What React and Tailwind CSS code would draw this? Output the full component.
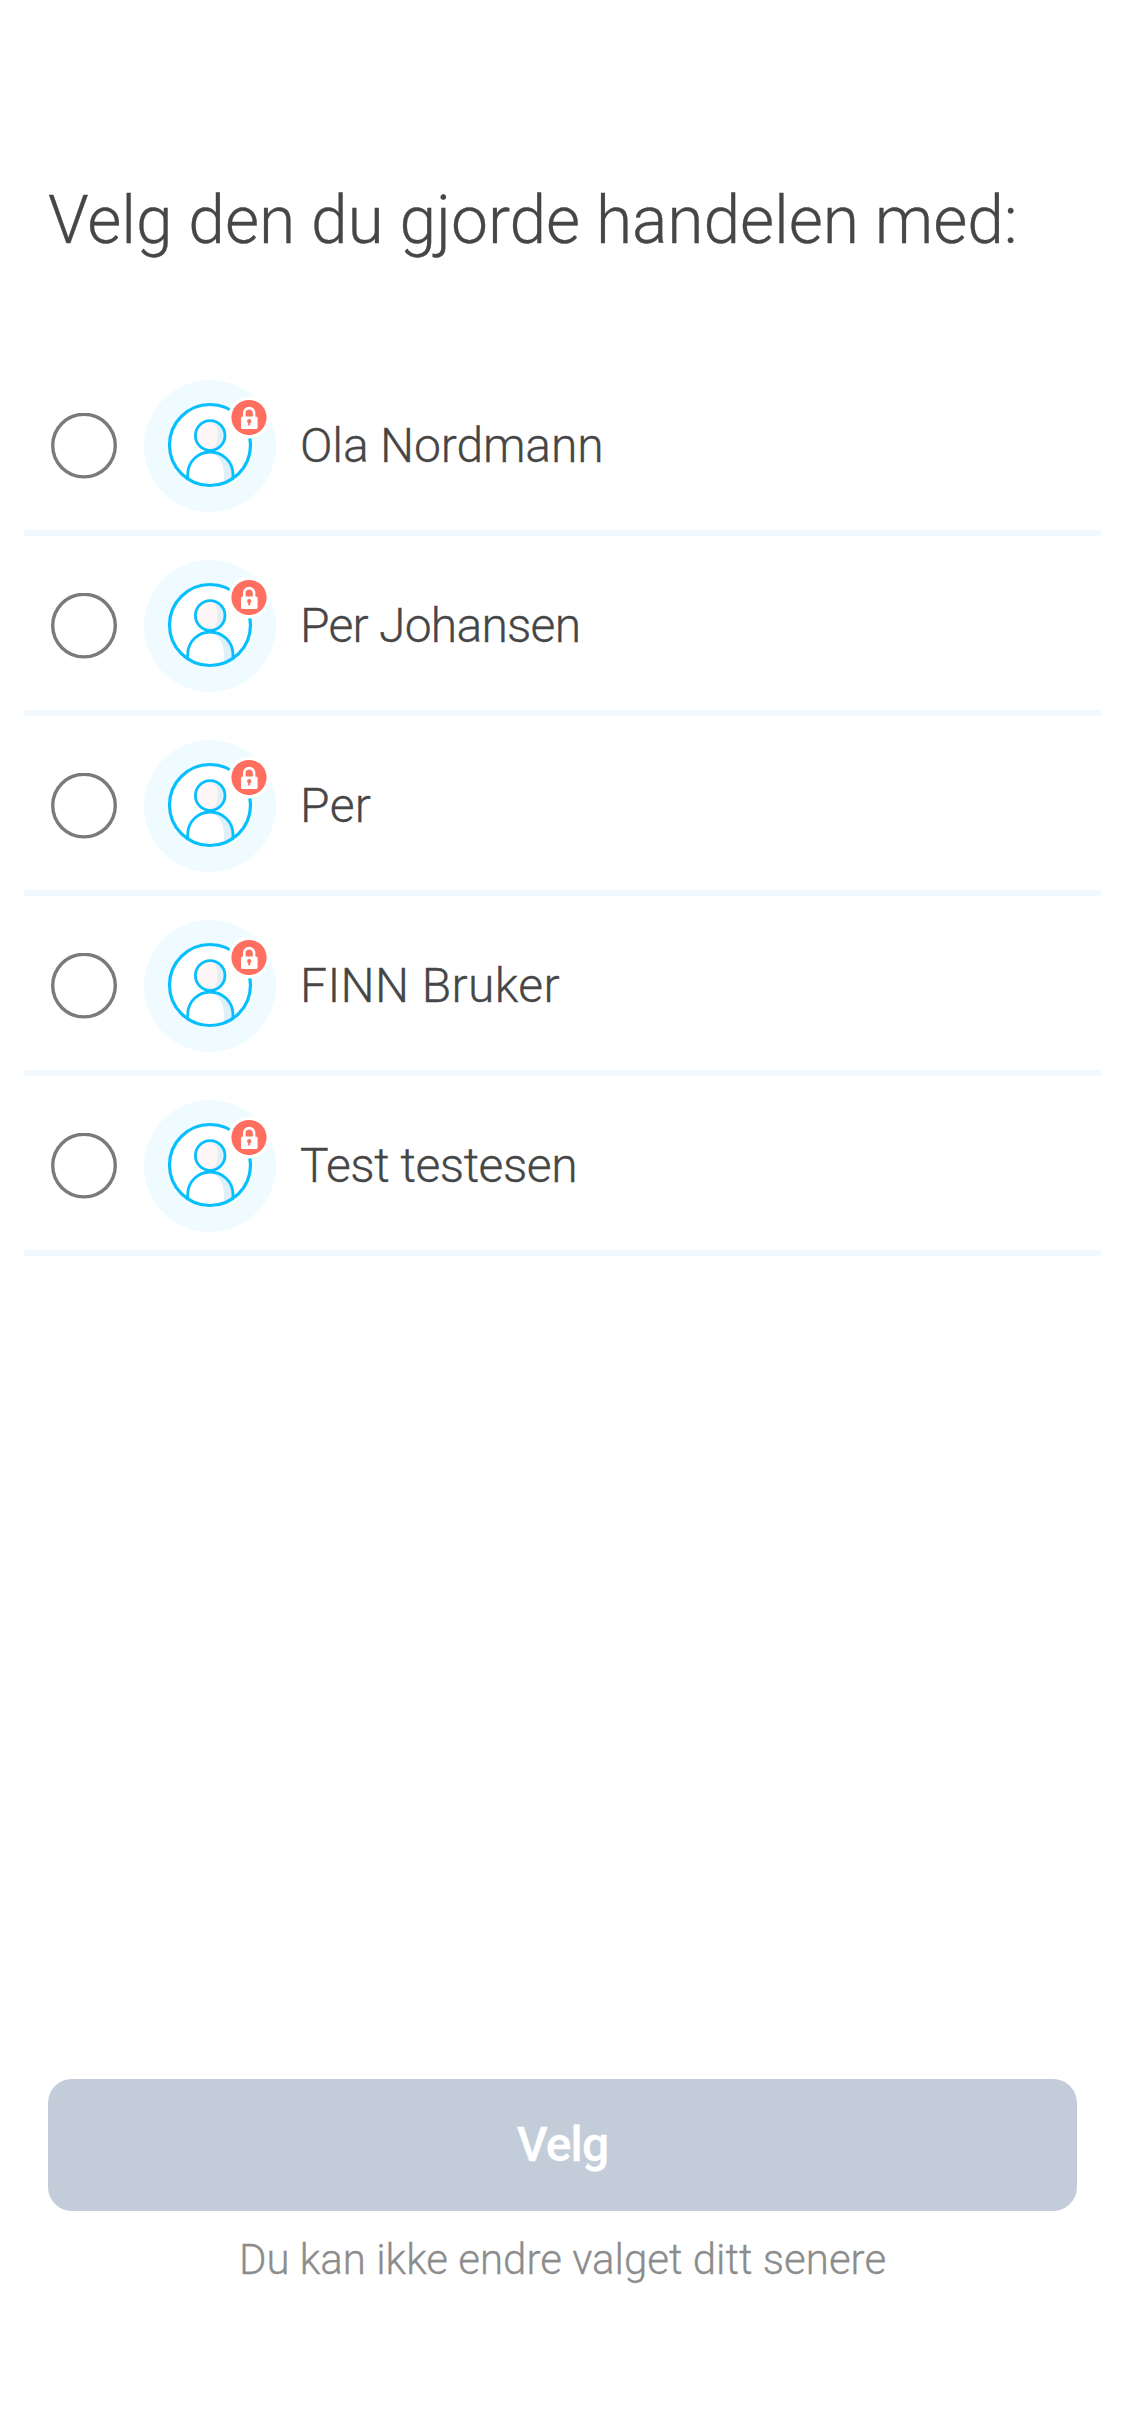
const people = [
  { name: "Ola Nordmann", tracking: "tracking-[-0.15px]" },
  { name: "Per Johansen", tracking: "tracking-[-0.75px]" },
  { name: "Per", tracking: "tracking-[0.4px]" },
  { name: "FINN Bruker", tracking: "tracking-[0.4px]" },
  { name: "Test testesen", tracking: "tracking-[-0.45px]" },
];

function Radio() {
  return (
    <svg viewBox="0 0 66 66" className="size-[66px] shrink-0" aria-hidden="true">
      <circle cx="33" cy="32.6" r="31.3" fill="#fff" stroke="#7a7a7a" strokeWidth="3.4" />
    </svg>
  );
}

function Avatar() {
  return (
    <svg viewBox="0 0 132 132" className="size-[132px] shrink-0" aria-hidden="true">
      <defs>
        <clipPath id="ring">
          <circle cx="66" cy="65" r="40.6" />
        </clipPath>
        <clipPath id="head">
          <circle cx="66.2" cy="55.5" r="14.8" />
        </clipPath>
      </defs>
      <circle cx="66" cy="66" r="66" fill="#f0fbff" />
      <circle cx="66" cy="65" r="40.6" fill="#fff" />
      <g clipPath="url(#ring)">
        <path d="M66.3 72C79 72 89 82 89 95v14H80V95c0-11-5-20-13.7-23z" fill="#dff0f9" />
        <path d="M43.7 110V94.6C43.7 82 53.8 72 66.3 72S89 82 89 94.6V110" fill="none" stroke="#06bffc" strokeWidth="2.8" />
      </g>
      <circle cx="66.2" cy="55.5" r="14.8" fill="#dff0f9" />
      <ellipse cx="58" cy="55.5" rx="15.5" ry="22" fill="#fff7f7" clipPath="url(#head)" />
      <circle cx="66.2" cy="55.5" r="14.8" fill="none" stroke="#06bffc" strokeWidth="2.8" />
      <circle cx="66" cy="65" r="40.5" fill="none" stroke="#06bffc" strokeWidth="3.2" />
      <circle cx="105" cy="37.5" r="21" fill="#fff" />
      <circle cx="105" cy="37.5" r="17.6" fill="#ff6e5e" />
      <path d="M100.3 37.5V33a4.9 4.9 0 0 1 9.8 0v4.5" fill="none" stroke="#fff" strokeWidth="2.6" />
      <rect x="97" y="36.4" width="16.6" height="12.6" rx="1.6" fill="#fff" />
      <circle cx="105.2" cy="41.2" r="2.1" fill="#ff6e5e" />
      <path d="M104.4 42h1.6l.3 3.2h-2.2z" fill="#ff6e5e" />
    </svg>
  );
}

export default function App() {
  return (
    <main className="flex h-[2436px] w-[1125px] flex-col bg-white font-['Roboto',sans-serif] font-light text-[#464646] [-webkit-text-stroke:0.3px]">
      <h1 className="mt-[182px] ml-[48px] text-[66px] leading-[77px] font-light tracking-[-0.13px] whitespace-nowrap">
        Velg den du gjorde handelen med:
      </h1>
      <ul className="mx-6 mt-[97px]">
        {people.map(({ name, tracking }) => (
          <li key={name} className="flex h-[180px] items-center border-b-[6px] border-[#f1f8fe] pb-[6px] pl-[27px] pt-[12px]">
            <Radio />
            <span className="ml-[27px] flex">
              <Avatar />
            </span>
            <span className={`ml-[24px] text-[48px] leading-[60px] ${tracking}`}>{name}</span>
          </li>
        ))}
      </ul>
      <div className="mt-auto mb-[146px] flex flex-col px-12">
        <button className="h-[132px] rounded-[24px] bg-[#c3ccd9] text-[48px] font-medium tracking-[-0.9px] text-white">Velg</button>
        <p className="mt-[19px] text-center text-[42px] leading-[60px] text-[#8c8c8c]">
          Du kan ikke endre valget ditt senere
        </p>
      </div>
    </main>
  );
}
